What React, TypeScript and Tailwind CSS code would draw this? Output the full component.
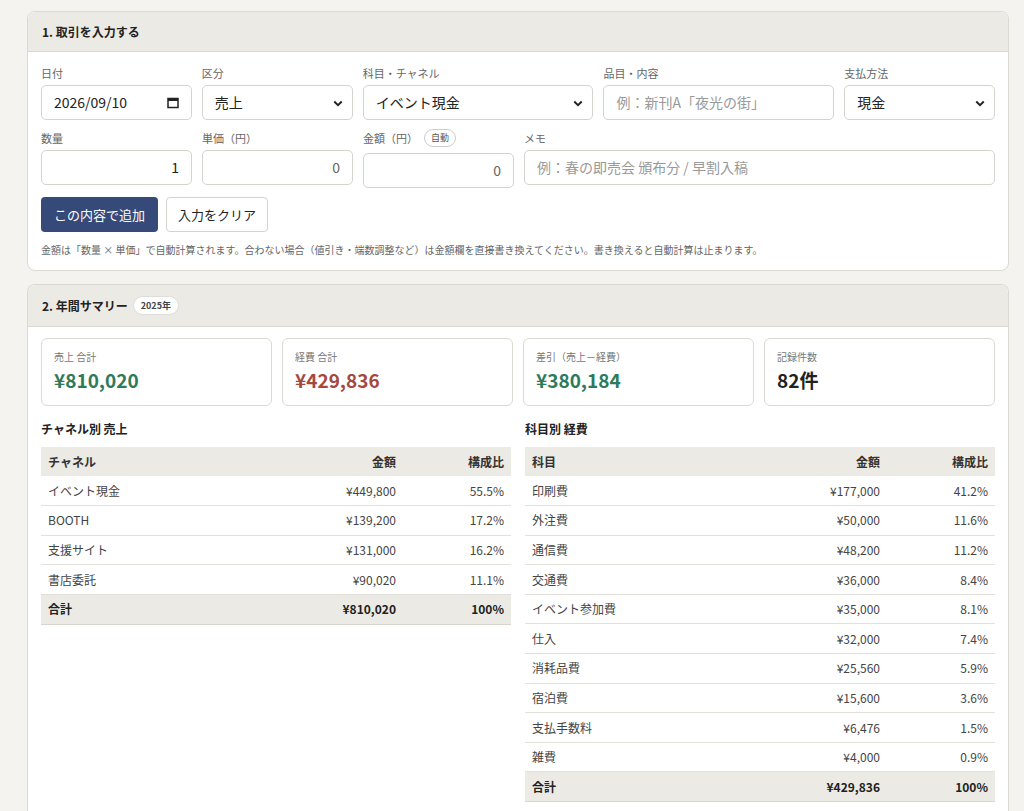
import React from "react";

const F = { fontFamily: '"Noto Sans CJK JP", "Noto Sans", sans-serif' };

function Chevron() {
  return (
    <svg width="12" height="12" viewBox="0 0 16 16" className="absolute right-2 top-1/2 -translate-y-1/2">
      <path d="M3 6l5 5 5-5" fill="none" stroke="#222" strokeWidth="2.5" />
    </svg>
  );
}

const inputBase = "h-[35px] w-full rounded-[5px] border border-[#d6d3cc] bg-white px-3 text-[14px] text-[#222] flex items-center";

function Field({ label, w, children, extra }: { label: string; w: string; children: React.ReactNode; extra?: React.ReactNode }) {
  return (
    <div className={w + " flex flex-col"}>
      <div className="flex h-[24px] items-center gap-1 text-[11px] text-[#666]">
        {label}
        {extra}
      </div>
      {children}
    </div>
  );
}

function Select({ v }: { v: string }) {
  return (
    <div className={inputBase + " relative"}>
      {v}
      <Chevron />
    </div>
  );
}

const channels = [
  ["イベント現金", "¥449,800", "55.5%"],
  ["BOOTH", "¥139,200", "17.2%"],
  ["支援サイト", "¥131,000", "16.2%"],
  ["書店委託", "¥90,020", "11.1%"],
];
const costs = [
  ["印刷費", "¥177,000", "41.2%"],
  ["外注費", "¥50,000", "11.6%"],
  ["通信費", "¥48,200", "11.2%"],
  ["交通費", "¥36,000", "8.4%"],
  ["イベント参加費", "¥35,000", "8.1%"],
  ["仕入", "¥32,000", "7.4%"],
  ["消耗品費", "¥25,560", "5.9%"],
  ["宿泊費", "¥15,600", "3.6%"],
  ["支払手数料", "¥6,476", "1.5%"],
  ["雑費", "¥4,000", "0.9%"],
];

function Table({ title, head, rows, total }: { title: string; head: string; rows: string[][]; total: string }) {
  return (
    <div className="flex-1">
      <div className="mb-[9px] mt-[2px] text-[12px] font-bold text-[#222]">{title}</div>
      <table className="w-full border-collapse text-[12px]">
        <thead>
          <tr className="h-[29px] bg-[#eceae4] font-bold text-[#333]">
            <td className="px-[7px]">{head}</td>
            <td className="text-right">金額</td>
            <td className="w-[115px] pr-[7px] text-right">構成比</td>
          </tr>
        </thead>
        <tbody>
          {rows.map((r) => (
            <tr key={r[0]} className="h-[29.6px] border-b border-[#e3e0da] text-[#444]">
              <td className="px-[7px]">{r[0]}</td>
              <td className="text-right">{r[1]}</td>
              <td className="pr-[7px] text-right">{r[2]}</td>
            </tr>
          ))}
          <tr className="h-[30px] border-b border-[#d8d5ce] bg-[#eceae4] font-bold text-[#222]">
            <td className="px-[7px]">合計</td>
            <td className="text-right">{total}</td>
            <td className="pr-[7px] text-right">100%</td>
          </tr>
        </tbody>
      </table>
    </div>
  );
}

function Stat({ label, value, color }: { label: string; value: string; color: string }) {
  return (
    <div className="h-[68px] flex-1 rounded-[6px] border border-[#dcd9d2] bg-white px-3 pt-[10px]">
      <div className="text-[10px] text-[#777]">{label}</div>
      <div className={"mt-[2px] text-[19px] font-bold " + color}>{value}</div>
    </div>
  );
}

export default function App() {
  return (
    <div style={F} className="min-h-[811px] w-[1024px] bg-[#f4f3ef] pl-[27px] pr-[15px] pt-[11px]">
      <div className="rounded-[8px] border border-[#dcd9d2] bg-white">
        <div className="flex h-[40px] items-center rounded-t-[8px] border-b border-[#dcd9d2] bg-[#eceae4] px-[14px] text-[12px] font-bold text-[#222]">
          1. 取引を入力する
        </div>
        <div className="px-[13px] pb-[13px] pt-[9px]">
          <div className="flex gap-[10px]">
            <Field label="日付" w="w-[151px]">
              <div className={inputBase + " justify-between"}>
                2026/09/10
                <svg width="12" height="12" viewBox="0 0 12 12"><rect x="1" y="1.5" width="10" height="9" fill="none" stroke="#222" strokeWidth="1.5" /><rect x="1" y="1.5" width="10" height="2.5" fill="#222" /></svg>
              </div>
            </Field>
            <Field label="区分" w="w-[151px]"><Select v="売上" /></Field>
            <Field label="科目・チャネル" w="w-[231px]"><Select v="イベント現金" /></Field>
            <Field label="品目・内容" w="w-[231px]">
              <div className={inputBase + " text-[#999]"}>例：新刊A「夜光の街」</div>
            </Field>
            <Field label="支払方法" w="w-[151px]"><Select v="現金" /></Field>
          </div>
          <div className="mt-[6px] flex items-start gap-[10px]">
            <Field label="数量" w="w-[151px]"><div className={inputBase + " h-[34px] justify-end"}>1</div></Field>
            <Field label="単価（円）" w="w-[151px]"><div className={inputBase + " h-[34px] justify-end text-[#666]"}>0</div></Field>
            <Field
              label="金額（円）"
              w="w-[151px]"
              extra={<span className="ml-[2px] rounded-full border border-[#ccc] bg-white px-[6px] py-[1px] text-[9px] text-[#555]">自動</span>}
            >
              <div className={inputBase + " mt-[3px] h-[34px] justify-end text-[#666]"}>0</div>
            </Field>
            <Field label="メモ" w="flex-1">
              <div className={inputBase + " h-[34px] text-[#999]"}>例：春の即売会 頒布分 / 早割入稿</div>
            </Field>
          </div>
          <div className="mt-[9px] flex gap-[8px]">
            <button className="h-[35px] rounded-[4px] bg-[#354a78] px-[13px] text-[13px] text-white">この内容で追加</button>
            <button className="h-[35px] rounded-[4px] border border-[#d6d3cc] bg-white px-[11px] text-[13px] text-[#222]">入力をクリア</button>
          </div>
          <div className="mt-[10px] text-[10px] text-[#666]">
            金額は「数量 × 単価」で自動計算されます。合わない場合（値引き・端数調整など）は金額欄を直接書き換えてください。書き換えると自動計算は止まります。
          </div>
        </div>
      </div>

      <div className="mt-[13px] rounded-t-[8px] border border-b-0 border-[#dcd9d2] bg-white pb-[20px]">
        <div className="flex h-[42px] items-center gap-[5px] rounded-t-[8px] border-b border-[#dcd9d2] bg-[#eceae4] px-[14px] text-[12px] font-bold text-[#222]">
          2. 年間サマリー
          <span className="rounded-full border border-[#ddd] bg-white px-[7px] py-[2px] text-[9px] font-bold text-[#444]">2025年</span>
        </div>
        <div className="px-[13px] pt-[11px]">
          <div className="flex gap-[10px]">
            <Stat label="売上 合計" value="¥810,020" color="text-[#2e7a5a]" />
            <Stat label="経費 合計" value="¥429,836" color="text-[#a5483e]" />
            <Stat label="差引（売上－経費）" value="¥380,184" color="text-[#2e7a5a]" />
            <Stat label="記録件数" value="82件" color="text-[#222]" />
          </div>
          <div className="mt-[12px] flex items-start gap-[14px]">
            <Table title="チャネル別 売上" head="チャネル" rows={channels} total="¥810,020" />
            <Table title="科目別 経費" head="科目" rows={costs} total="¥429,836" />
          </div>
        </div>
      </div>
    </div>
  );
}
